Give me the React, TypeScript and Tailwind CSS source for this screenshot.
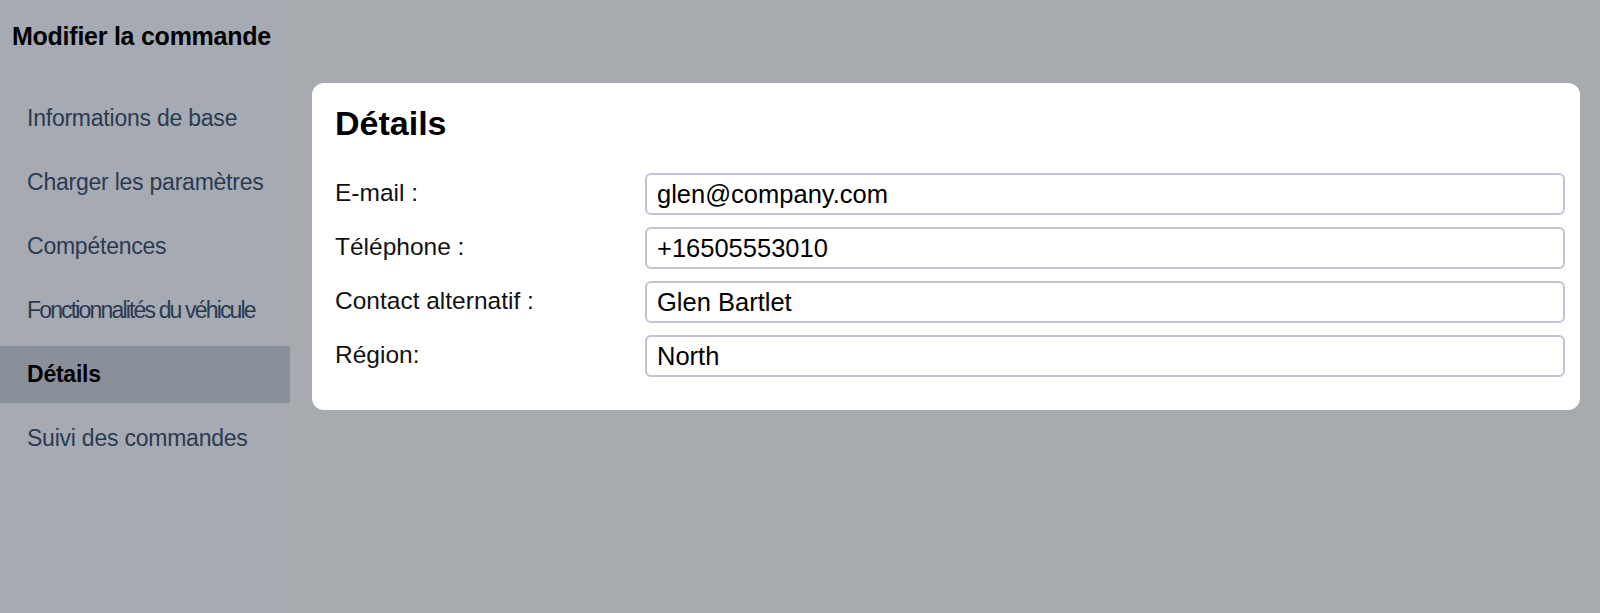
import { useState } from 'react'

const NAV_ITEMS = [
  'Informations de base',
  'Charger les paramètres',
  'Compétences',
  'Fonctionnalités du véhicule',
  'Détails',
  'Suivi des commandes',
]

const FIELDS = [
  { label: 'E-mail :', value: 'glen@company.com' },
  { label: 'Téléphone :', value: '+16505553010' },
  { label: 'Contact alternatif :', value: 'Glen Bartlet' },
  { label: 'Région:', value: 'North' },
]

export default function App() {
  const [active, setActive] = useState('Détails')

  return (
    <div className="flex h-[613px] w-full bg-[#a7aaaf] font-['Liberation_Sans',Arial,sans-serif]">
      {/* Sidebar */}
      <aside className="w-[290px] shrink-0 bg-[#a6aab2]">
        <h1 className="pl-3 pt-[21px] text-[25px] font-bold leading-[30px] tracking-[-0.01em] text-black">
          Modifier la commande
        </h1>
        <nav className="mt-[39px] flex flex-col">
          {NAV_ITEMS.map(item => (
            <button
              key={item}
              onClick={() => setActive(item)}
              className={`
                flex h-[57px] items-center pl-[27px] text-left text-[23px] mb-[7px]
                ${item === 'Fonctionnalités du véhicule' ? 'tracking-[-0.08em]' : 'tracking-[-0.01em]'}
                ${active === item ? 'bg-[#8a909a] font-bold text-black' : 'text-[#2b3a52]'}
              `}
            >
              {item}
            </button>
          ))}
        </nav>
      </aside>

      {/* Main */}
      <main className="flex-1 pl-[22px] pr-5 pt-[83px]">
        <section className="rounded-[12px] bg-white pl-[23px] pr-[15px] pt-[20px] pb-[33px]">
          <h2 className="text-[34px] font-bold leading-[40px] text-black">Détails</h2>
          <div className="mt-[30px] flex flex-col gap-[12px]">
            {FIELDS.map(field => (
              <div key={field.label} className="flex items-center">
                <label className="w-[310px] shrink-0 text-[24.5px] text-[#111] -mt-[1px]">
                  {field.label}
                </label>
                <input
                  readOnly
                  value={field.value}
                  className="h-[42px] flex-1 rounded-[6px] border-2 border-[#c3c2d3] bg-white px-[10px] text-[25.5px] text-black outline-none"
                />
              </div>
            ))}
          </div>
        </section>
      </main>
    </div>
  )
}
